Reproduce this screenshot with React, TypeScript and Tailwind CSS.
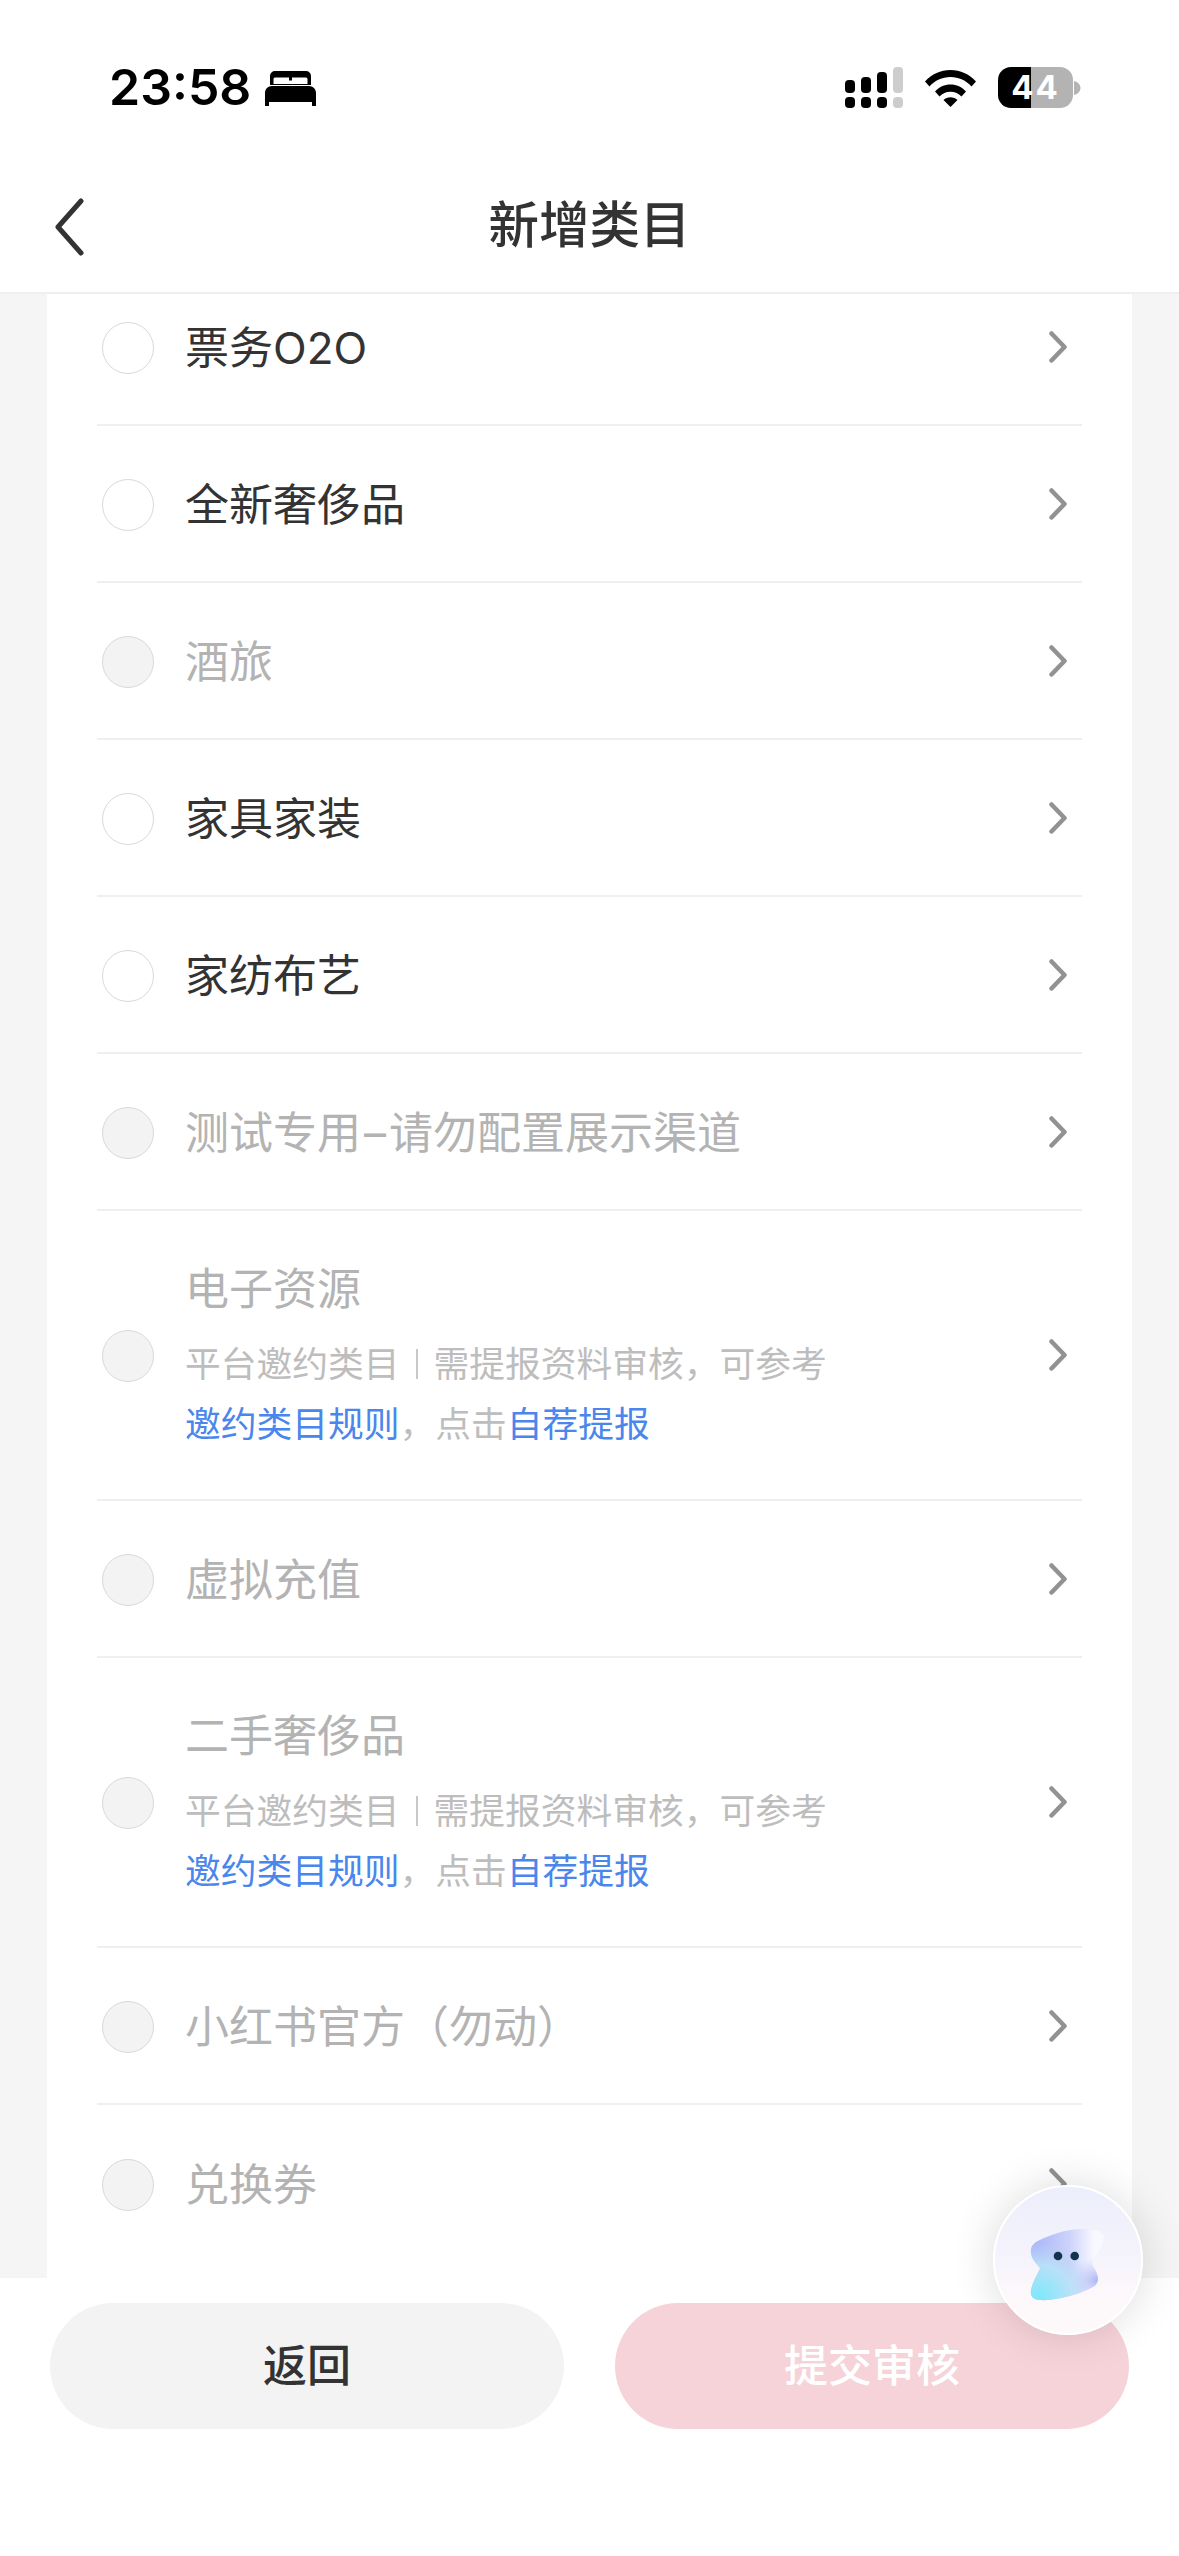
import React from "react";

type Item = {
  name: React.ReactNode;
  disabled?: boolean;
  invite?: boolean;
};

const items: Item[] = [
  { name: "票务O2O" },
  { name: "全新奢侈品" },
  { name: "酒旅", disabled: true },
  { name: "家具家装" },
  { name: "家纺布艺" },
  {
    name: (
      <>
        测试专用<span className="mx-[3px]">–</span>请勿配置展示渠道
      </>
    ),
    disabled: true,
  },
  { name: "电子资源", disabled: true, invite: true },
  { name: "虚拟充值", disabled: true },
  { name: "二手奢侈品", disabled: true, invite: true },
  { name: "小红书官方（勿动）", disabled: true },
  { name: "兑换券", disabled: true },
];

function Chevron() {
  return (
    <svg width="18" height="32" viewBox="0 0 18 32" fill="none" className="shrink-0">
      <path d="M2.500 2.500L15.500 16 2.500 29.500" stroke="#929292" strokeWidth="4.500" strokeLinecap="round" strokeLinejoin="round" />
    </svg>
  );
}

function Row({ item, last }: { item: Item; last: boolean }) {
  return (
    <div
      className={`mx-[50px] flex items-center pl-[5px] pr-[15px] ${item.invite ? "h-[290px]" : "h-[157px]"} ${
        last ? "" : "border-b-2 border-[#efefef]"
      }`}
    >
      <div
        className={`mt-[2px] h-[52px] w-[52px] shrink-0 rounded-full border-[1.5px] border-[#d9d9d9] ${
          item.disabled ? "bg-[#f3f3f3]" : "bg-white"
        }`}
      />
      <div className="ml-[32px] flex-1 -translate-x-[1px] translate-y-[1px]">
        <div className={`text-[44px] leading-[60px] ${item.disabled ? "text-[#b3b3b3]" : "text-[#333333]"}`}>{item.name}</div>
        {item.invite && (
          <div className="mt-[15px] text-[35.75px] leading-[60px] text-[#bdbdbd]">
            <div className="flex items-center">
              平台邀约类目
              <span className="mx-[16px] h-[30px] w-[2px] bg-[#c8c8c8]" />
              需提报资料审核，可参考
            </div>
            <div>
              <span className="text-[#4a86ec]">邀约类目规则</span>，点击<span className="text-[#4a86ec]">自荐提报</span>
            </div>
          </div>
        )}
      </div>
      <Chevron />
    </div>
  );
}

function StatusIcons() {
  return (
    <div className="flex items-center">
      <svg width="58" height="41" viewBox="0 0 58 41">
        <rect x="0" y="13" width="10" height="13" rx="4" fill="#000" />
        <rect x="16" y="10" width="10" height="16" rx="4" fill="#000" />
        <rect x="32" y="5" width="10" height="21" rx="4" fill="#000" />
        <rect x="48" y="0" width="10" height="26" rx="4" fill="#cdcdcd" />
        <rect x="0" y="30" width="10" height="11" rx="4" fill="#000" />
        <rect x="16" y="30" width="10" height="11" rx="4" fill="#000" />
        <rect x="32" y="30" width="10" height="11" rx="4" fill="#000" />
        <rect x="48" y="30" width="10" height="11" rx="4" fill="#cdcdcd" />
      </svg>
      <svg width="51" height="38" viewBox="0 0 51 38" className="ml-[22px]">
        <path d="M0 12.5C7 5 15.5 1 25.5 1S44 5 51 12.5l-4.5 5C41 11.5 34 8 25.5 8S10 11.5 4.500 17.500z" fill="#000" />
        <path d="M10 22.500C14 18 19.500 15.500 25.500 15.500S37 18 41 22.500l-4.500 5C33.500 24.500 30 22.800 25.500 22.800S17.500 24.500 14.500 27.500z" fill="#000" />
        <path d="M18.500 31c2-1.800 4.300-2.700 7-2.700s5 .9 7 2.700l-7 7z" fill="#000" />
      </svg>
      <div className="ml-[22px] flex items-center">
        <div className="flex h-[41px] w-[75px] items-center justify-center rounded-[13px] bg-[linear-gradient(90deg,#000_44%,#b3b3b3_44%)] font-['Inter',sans-serif] text-[33px] font-bold leading-none tracking-[2px] text-white">
          44
        </div>
        <svg width="7" height="14" viewBox="0 0 7 14" className="ml-[1px]">
          <path d="M0 0c4 1 6.500 4 6.500 7S4 13 0 14z" fill="#b3b3b3" />
        </svg>
      </div>
    </div>
  );
}

function Mascot() {
  const blob =
    "M38.300 70C36.500 62 40 58 46.700 55C54 51.500 62 48.500 70 46.500C80 44 92 43 103 45.500C109 47 111.500 50 110.700 55C109.500 62 105 67 102 72C99.500 76 98.500 79 100.500 82C103 86 105.500 90 105 95C104.500 100 100 102.500 94 105C85 109 76 111.500 66.700 113.300C59 114.800 52 115.500 46.700 115C40 114.500 37 111 38 105.500C39 99 44 90 47.300 83.300C44.500 79.500 40 76 38.300 70Z";
  return (
    <div className="absolute left-[993px] top-[2185px] h-[150px] w-[150px] rounded-full border-2 border-white bg-[linear-gradient(180deg,#eceefb_0%,#f4f3fc_45%,#fdf8fa_75%)] shadow-[0_0_45px_rgba(0,0,0,0.14)]">
      <svg width="146" height="146" viewBox="2 2 146 146">
        <defs>
          <linearGradient id="blobBase" x1="0.1" y1="0.2" x2="0.95" y2="0.2">
            <stop offset="0" stopColor="#aebaf8" />
            <stop offset="0.5" stopColor="#ccd2fa" />
            <stop offset="0.9" stopColor="#f8f8ff" />
          </linearGradient>
          <radialGradient id="blobCyan" cx="0.12" cy="0.95" r="0.75">
            <stop offset="0" stopColor="#7ee9fb" />
            <stop offset="0.6" stopColor="#b9e3f8" stopOpacity="0.9" />
            <stop offset="1" stopColor="#b9d5f8" stopOpacity="0" />
          </radialGradient>
          <radialGradient id="blobRight" cx="0.9" cy="0.72" r="0.32">
            <stop offset="0" stopColor="#aeb8f3" />
            <stop offset="1" stopColor="#c0c8f6" stopOpacity="0" />
          </radialGradient>
        </defs>
        <path d={blob} fill="url(#blobBase)" />
        <path d={blob} fill="url(#blobCyan)" />
        <path d={blob} fill="url(#blobRight)" />
        <circle cx="65" cy="71" r="4.300" fill="#12344f" />
        <circle cx="81.700" cy="71" r="4.300" fill="#12344f" />
      </svg>
    </div>
  );
}

export default function App() {
  return (
    <div className="relative flex h-[2556px] w-[1179px] flex-col overflow-hidden bg-white font-['Inter','Noto_Sans_CJK_SC',sans-serif]">
      <header className="h-[294px] shrink-0 border-b-2 border-[#efefef] bg-white">
        <div className="flex h-[175px] items-start justify-between pl-[109px] pr-[98px] pt-[67px]">
          <div className="flex items-center">
            <span className="text-[50px] font-semibold leading-[41px] text-black">23:58</span>
            <svg width="51" height="35" viewBox="0 0 51 35" className="ml-[14px] mt-[2px]">
              <path
                fillRule="evenodd"
                d="M5 14V5a5 5 0 0 1 5-5h31a5 5 0 0 1 5 5v9zM10 6.500a1.500 1.500 0 0 0-1.500 1.500v5h34V8a1.500 1.500 0 0 0-1.500-1.500H27v3h-3v-3z"
                fill="#000"
              />
              <path d="M7 15h37c4 0 7 3 7 7v13h-4v-4H4v4H0V22c0-4 3-7 7-7z" fill="#000" />
            </svg>
          </div>
          <StatusIcons />
        </div>
        <div className="grid h-[118px] grid-cols-[1fr_auto_1fr] items-center pl-[54px]">
          <svg width="30" height="60" viewBox="0 0 30 60" fill="none" className="mb-[14px]">
            <path d="M27 4L4 30l23 26" stroke="#333333" strokeWidth="5" strokeLinecap="round" strokeLinejoin="round" />
          </svg>
          <h1 className="mb-[18px] pr-[54px] text-[50.5px] font-medium leading-none text-[#333333]">新增类目</h1>
        </div>
      </header>
      <main className="flex-1 overflow-hidden bg-[#f5f5f5] px-[47px]">
        <div className="-mt-[25px] h-[2100px] bg-white">
          {items.map((item, i) => (
            <Row key={i} item={item} last={i === items.length - 1} />
          ))}
        </div>
      </main>
      <footer className="flex h-[278px] shrink-0 justify-between bg-white pl-[50px] pr-[50px] pt-[25px]">
        <button className="h-[126px] w-[514px] rounded-full bg-[#f3f3f3] text-[44px] font-medium text-[#333333]">返回</button>
        <button className="h-[126px] w-[514px] rounded-full bg-[#f6d3d9] text-[44px] font-medium text-white">提交审核</button>
      </footer>
      <Mascot />
    </div>
  );
}
